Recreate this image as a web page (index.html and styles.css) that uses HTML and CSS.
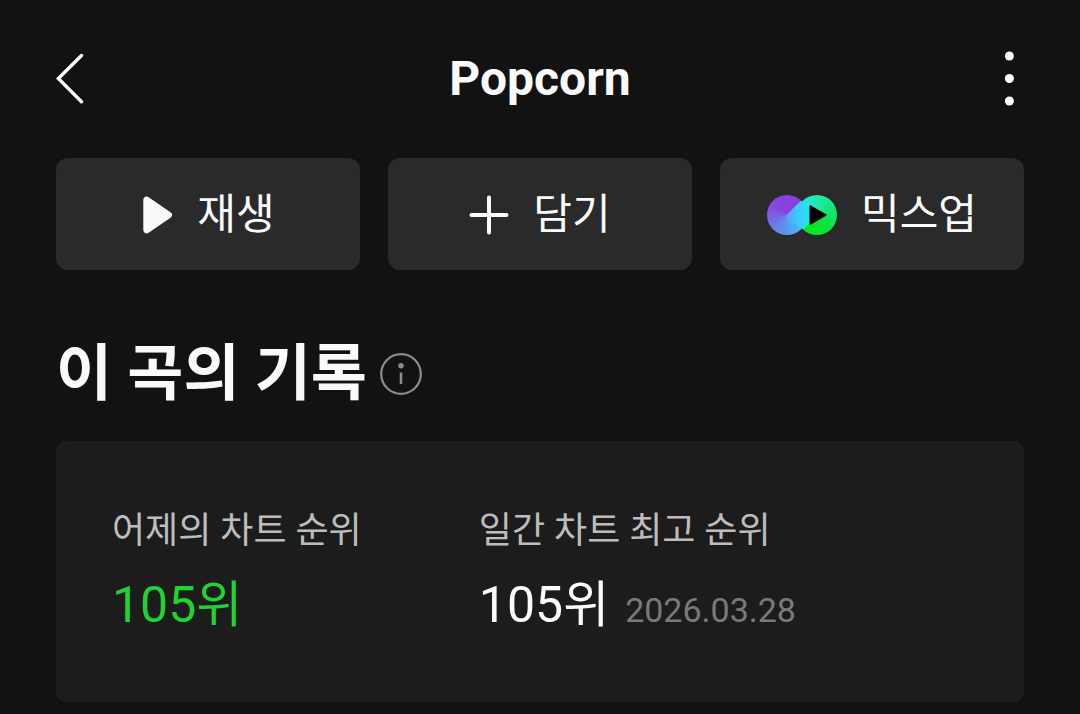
FILE: index.html
```html
<!DOCTYPE html>
<html lang="ko">
<head>
<meta charset="utf-8">
<meta name="viewport" content="width=device-width, initial-scale=1">
<title>Popcorn</title>
<link rel="stylesheet" href="styles.css">
</head>
<body>
<header class="topbar">
  <button class="icon-button" type="button" aria-label="뒤로">
    <svg width="28" height="52" viewBox="0 0 28 52" fill="none" stroke="#fff" stroke-width="3.4" stroke-linecap="round" stroke-linejoin="miter"><path d="M25.5 2.5 2.3 25.5 25.5 48.7"/></svg>
  </button>
  <h1 class="topbar-title">Popcorn</h1>
  <button class="icon-button icon-button-end" type="button" aria-label="더보기">
    <svg width="28" height="56" viewBox="0 0 28 56" fill="#fff"><circle cx="13.4" cy="5" r="4.5"/><circle cx="13.4" cy="27.5" r="4.5"/><circle cx="13.4" cy="50" r="4.5"/></svg>
  </button>
</header>
<main class="content">
  <div class="actions">
    <button class="action" type="button">
      <svg width="32" height="40" viewBox="0 0 32 40" fill="#fafafa"><path d="M2.3 5.2C2.3 1.9 5.4.6 8 2.5L29.5 17.3c2.4 1.7 2.4 3.7 0 5.4L8 37.5c-2.6 1.9-5.7.6-5.7-2.7Z"/></svg>
      <span>재생</span>
    </button>
    <button class="action" type="button">
      <svg width="40" height="40" viewBox="0 0 40 40" fill="none" stroke="#fafafa" stroke-width="4" stroke-linecap="round"><path d="M2.5 20h35M20 2.5v35"/></svg>
      <span>담기</span>
    </button>
    <button class="action" type="button">
      <span class="mixup" aria-hidden="true">
        <span class="mixup-disc mixup-violet"></span>
        <span class="mixup-disc mixup-green"></span>
        <span class="mixup-band"></span>
        <svg class="mixup-play" width="70" height="40" viewBox="0 0 70 40"><path d="M43.5 11.3v17.4L58.5 20Z" fill="#000" stroke="#000" stroke-width="2" stroke-linejoin="round"/></svg>
      </span>
      <span>믹스업</span>
    </button>
  </div>
  <section class="records">
    <div class="records-head">
      <h2 class="records-title">이 곡의 기록</h2>
      <button class="info" type="button" aria-label="안내">
        <svg width="42" height="42" viewBox="0 0 42 42"><circle cx="21" cy="21" r="19.8" fill="none" stroke="#8c8c8c" stroke-width="2.2"/><circle cx="21" cy="12.7" r="2.7" fill="#8c8c8c"/><path d="M21 19.5v11.5" stroke="#8c8c8c" stroke-width="2.6"/></svg>
      </button>
    </div>
    <dl class="card">
      <div class="stat">
        <dt class="stat-label">어제의 차트 순위</dt>
        <dd class="stat-row"><span class="stat-value stat-value-green">105위</span></dd>
      </div>
      <div class="stat">
        <dt class="stat-label">일간 차트 최고 순위</dt>
        <dd class="stat-row"><span class="stat-value">105위</span><time class="stat-date" datetime="2026-03-28">2026.03.28</time></dd>
      </div>
    </dl>
  </section>
</main>
</body>
</html>
```
FILE: styles.css
```css
* {
  box-sizing: border-box;
}

body {
  margin: 0;
  background: #121212;
  color: #fafafa;
  font-family: Roboto, "Noto Sans CJK KR", sans-serif;
}

button {
  padding: 0;
  border: 0;
  background: none;
  color: inherit;
  font: inherit;
  cursor: pointer;
}

svg {
  display: block;
  flex: none;
}

.topbar {
  display: grid;
  grid-template-columns: 56px 1fr 56px;
  align-items: center;
  padding: 44px 56px 0;
}

.icon-button {
  display: flex;
  align-items: center;
  height: 70px;
}

.icon-button-end {
  justify-content: flex-end;
}

.topbar-title {
  margin: 0;
  font-size: 48px;
  font-weight: 700;
  line-height: 70px;
  text-align: center;
}

.content {
  padding: 44px 56px 12px;
}

.actions {
  display: grid;
  grid-template-columns: repeat(3, 1fr);
  gap: 28px;
}

.action {
  display: flex;
  align-items: center;
  justify-content: center;
  gap: 24px;
  height: 112px;
  padding-top: 1px;
  border-radius: 12px;
  background: #2a2a2a;
  font-size: 42px;
  line-height: 60px;
}

.mixup {
  position: relative;
  width: 70px;
  height: 40px;
}

.mixup-disc {
  position: absolute;
  top: 0;
  width: 40px;
  height: 40px;
  border-radius: 50%;
}

.mixup-violet {
  left: 0;
  background: conic-gradient(from 45deg, #4cc4fa, #4cb4fa 90deg, #5a96ee 140deg, #6a7ae6 190deg, #8054e0 240deg, #8a40e0 280deg, #8a40e0 360deg);
}

.mixup-green {
  right: 0;
  background: conic-gradient(from 225deg, #28e4f0, #28e4d8 90deg, #20e8a0 150deg, #14e470 210deg, #0ae432 290deg, #06e81e 360deg);
}

.mixup-band {
  position: absolute;
  inset: 0;
  background: linear-gradient(90deg, #58a0f4 20px, #3cc8fa 30px, #24e6f0 42px);
  clip-path: polygon(20px 20px, 36px 6px, 50px 20px, 34px 34px);
}

.mixup-play {
  position: absolute;
  inset: 0;
}

.records {
  margin-top: 60px;
}

.records-head {
  display: flex;
  align-items: center;
  gap: 13px;
}

.records-title {
  margin: 0;
  font-size: 61px;
  font-weight: 700;
  line-height: 88px;
}

.card {
  display: grid;
  grid-template-columns: 3fr 4fr;
  margin: 23px 0 0;
  padding: 62px 56px 54px;
  border-radius: 10px;
  background: #1c1c1c;
}

.stat-label {
  color: #bdbdbd;
  font-size: 36px;
  line-height: 56px;
}

.stat-row {
  display: flex;
  align-items: baseline;
  gap: 16px;
  margin: 9px 0 0;
  line-height: 75px;
}

.stat-value {
  font-size: 50px;
}

.stat-value-green {
  color: #1fd331;
}

.stat-date {
  color: #7a7a7a;
  font-size: 34px;
}
```
